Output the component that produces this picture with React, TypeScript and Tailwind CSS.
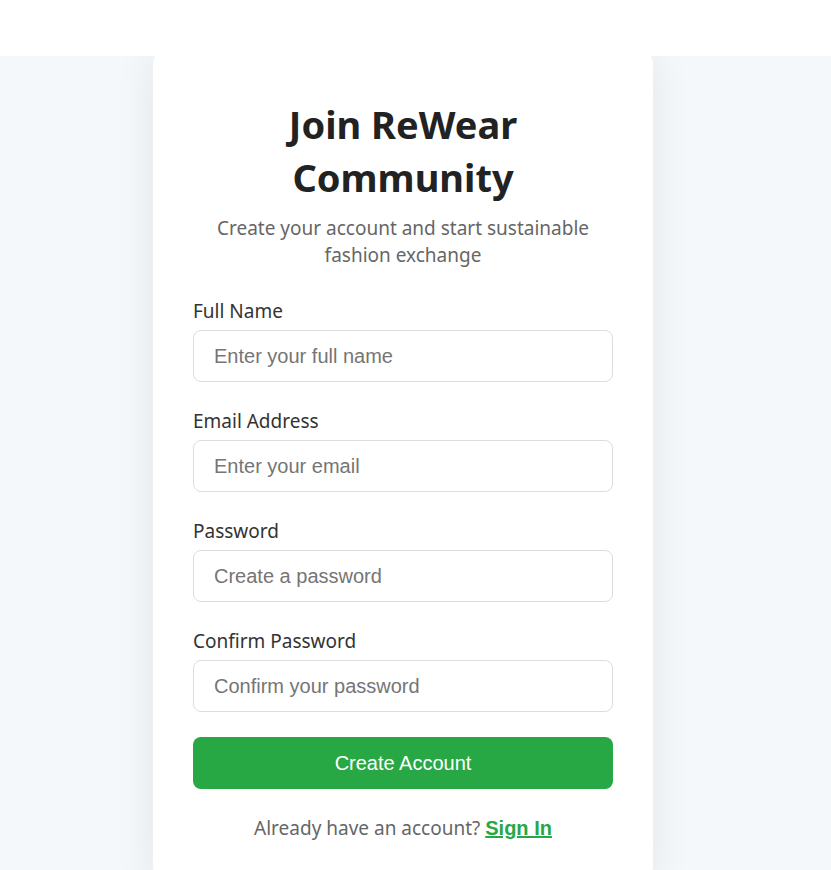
import React from 'react';

const fields = [
  { label: 'Full Name', type: 'text', placeholder: 'Enter your full name' },
  { label: 'Email Address', type: 'email', placeholder: 'Enter your email' },
  { label: 'Password', type: 'password', placeholder: 'Create a password' },
  { label: 'Confirm Password', type: 'password', placeholder: 'Confirm your password' },
];

export default function App() {
  return (
    <div className="min-h-[870px] bg-[#f5f8fa] font-['Noto_Sans',sans-serif]">
      <header className="relative z-10 h-14 bg-white" />

      <main className="flex justify-center pr-[25px]">
        <div className="-mt-2 w-[500px] rounded-2xl bg-white px-10 pt-[50px] pb-10 shadow-[0_4px_40px_rgba(0,0,0,0.08)]">
          <h1 className="text-center text-[38px] font-bold leading-[53px] text-[#222]">
            Join ReWear
            <br />
            Community
          </h1>
          <p className="mt-[11px] text-center text-[19px] leading-[27px] text-[#666]">
            Create your account and start sustainable
            <br />
            fashion exchange
          </p>

          <form className="mt-[30px] flex flex-col gap-[27px]" onSubmit={(e) => e.preventDefault()}>
            {fields.map((f) => (
              <div key={f.label} className="flex flex-col">
                <label className="mb-[7px] text-[19px] leading-[24px] text-[#333]">{f.label}</label>
                <input
                  type={f.type}
                  placeholder={f.placeholder}
                  className="h-[52px] w-full rounded-lg border border-[#ddd] px-5 font-['Liberation_Sans',Arial,sans-serif] text-xl text-[#333] outline-none placeholder:text-[#757575]"
                />
              </div>
            ))}

            <button
              type="submit"
              className="-mt-[2px] h-[52px] w-full rounded-lg bg-[#28a745] font-['Liberation_Sans',Arial,sans-serif] text-xl text-white"
            >
              Create Account
            </button>
          </form>

          <p className="mt-[25px] text-center text-[19px] leading-[28px] text-[#666]">
            Already have an account?{' '}
            <a href="#" className="font-['Liberation_Sans',Arial,sans-serif] text-xl font-bold text-[#28a745] underline">
              Sign In
            </a>
          </p>
        </div>
      </main>
    </div>
  );
}
